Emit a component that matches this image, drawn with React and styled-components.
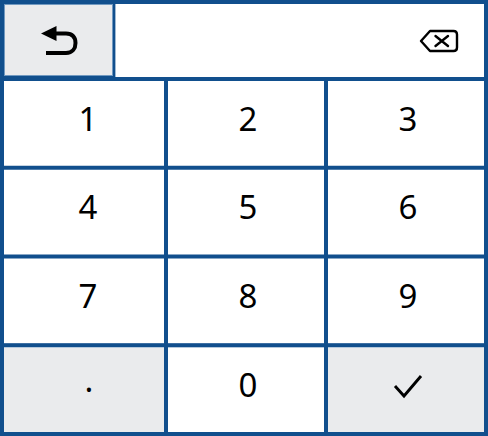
import React from 'react';
import styled, { createGlobalStyle } from 'styled-components';

const Global = createGlobalStyle`
  *, *::before, *::after { box-sizing: border-box; }
  body { margin: 0; background: #114f8d; }
`;

const Panel = styled.main`
  width: 488px;
  height: 436px;
  padding: 4px;
  background: #114f8d;
  display: grid;
  grid-template-rows: 73px 351px;
  row-gap: 4px;
  overflow: hidden;
`;

const TopBar = styled.header`
  display: grid;
  grid-template-columns: 109px 369px;
  column-gap: 2px;
`;

const ResetButton = styled.button`
  appearance: none;
  height: 72px;
  padding: 2px 0 0 2px;
  border: 1px solid #7199c0;
  background: #eaebed;
  display: flex;
  align-items: center;
  justify-content: center;
`;

const Display = styled.div`
  border-left: 1px solid #a0bad3;
  background: #fff;
  display: flex;
  align-items: center;
  justify-content: flex-end;
  padding-right: 24px;
`;

const ClearButton = styled.button`
  appearance: none;
  border: 0;
  padding: 0;
  background: none;
  display: flex;
`;

const Keypad = styled.section`
  display: grid;
  grid-template-columns: 160px 156px 156px;
  grid-template-rows: 85px 86px 86px 85px;
  gap: 3px 4px;
`;

const edges = [
  ['transparent', '#c4d3e2'],
  ['#507eac', '#88a7c6'],
  ['#88a7c6', '#3f70a3'],
  ['#b4c8dc', 'transparent'],
];

const Key = styled.button`
  appearance: none;
  margin: 0;
  border: 0;
  padding: 0 0 ${p => [10, 12, 11, 10][p.$row]}px ${p => [8, 4, 4][p.$col]}px;
  display: flex;
  align-items: center;
  justify-content: center;
  font: 400 33px/45px "Noto Sans", "Open Sans", sans-serif;
  color: #000;
  background: ${p => (p.$muted ? '#eaebed' : '#fff')};
  box-shadow: inset 0 1px ${p => edges[p.$row][0]}, inset 0 -1px ${p => edges[p.$row][1]};
`;

const DecimalKey = styled(Key)`
  padding: 0 0 20px 10px;
`;

const ConfirmKey = styled(Key)`
  padding-bottom: 6px;
`;

const Icon = styled.svg`
  display: block;
  flex: none;
  fill: none;
  stroke: #000;
`;

const ReturnIcon = () => (
  <Icon width="38" height="32" viewBox="0 0 38 32" strokeWidth="4">
    <path d="M15 8.5H25C31.5 8.5 34.5 12.5 34.5 18S31.5 28 25 28H5" />
    <path d="M0 8.5 15.5 1V16Z" fill="#000" stroke="none" />
  </Icon>
);

const BackspaceIcon = () => (
  <Icon width="42" height="26" viewBox="0 0 42 26" strokeWidth="2.4" strokeLinecap="round" strokeLinejoin="round">
    <path d="M12 3H35.5Q39 3 39 6.5V19.5Q39 23 35.5 23H12L3 13Z" />
    <path d="M17.5 8 30 18M30 8 17.5 18" />
  </Icon>
);

const CheckIcon = () => (
  <Icon width="30" height="26" viewBox="0 0 30 26" strokeWidth="2.9">
    <path d="m2 12 9 10L28 2" />
  </Icon>
);

const keys = ['1', '2', '3', '4', '5', '6', '7', '8', '9', '.', '0', 'ok'];

const keyTypes = { '.': DecimalKey, ok: ConfirmKey };

export default function App() {
  return (
    <>
      <Global />
      <Panel>
        <TopBar>
          <ResetButton aria-label="Back"><ReturnIcon /></ResetButton>
          <Display>
            <ClearButton aria-label="Delete"><BackspaceIcon /></ClearButton>
          </Display>
        </TopBar>
        <Keypad>
          {keys.map((key, i) => {
            const KeyType = keyTypes[key] || Key;
            return (
              <KeyType
                key={key}
                $row={Math.floor(i / 3)}
                $col={i % 3}
                $muted={key in keyTypes}
                aria-label={key === 'ok' ? 'Confirm' : undefined}
              >
                {key === 'ok' ? <CheckIcon /> : key}
              </KeyType>
            );
          })}
        </Keypad>
      </Panel>
    </>
  );
}
